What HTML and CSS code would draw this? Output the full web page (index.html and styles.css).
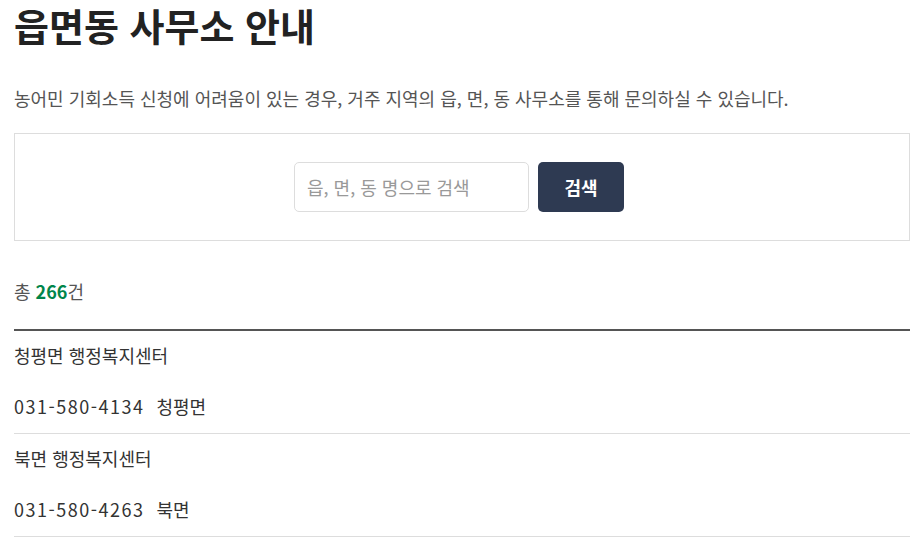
FILE: index.html
```html
<!DOCTYPE html>
<html lang="ko">
<head>
    <meta charset="utf-8">
    <title>읍면동 사무소 안내</title>
    <link rel="stylesheet" href="styles.css">
</head>
<body>
    <main class="page">
        <h1 class="page-title">읍면동 사무소 안내</h1>
        <p class="page-desc">농어민 기회소득 신청에 어려움이 있는 경우, 거주 지역의 읍, 면, 동 사무소를 통해 문의하실 수 있습니다.</p>

        <form class="search-box" onsubmit="return false;">
            <input class="search-input" type="text" placeholder="읍, 면, 동 명으로 검색">
            <button class="search-btn" type="submit">검색</button>
        </form>

        <p class="total">총 <strong>266</strong>건</p>

        <ul class="office-list">
            <li class="office">
                <div class="office-name">청평면 행정복지센터</div>
                <div class="office-info"><span class="tel">031-580-4134</span><span class="area">청평면</span></div>
            </li>
            <li class="office">
                <div class="office-name">북면 행정복지센터</div>
                <div class="office-info"><span class="tel">031-580-4263</span><span class="area">북면</span></div>
            </li>
        </ul>
    </main>
</body>
</html>
```

FILE: styles.css
```css
body {
    margin: 0;
    font-family: "Noto Sans CJK KR", "Noto Sans", sans-serif;
    color: #333;
    background: #fff;
}

.page {
    padding: 0 5px 0 14px;
}

.page-title {
    margin: -2px 0 0;
    font-size: 38px;
    line-height: 54px;
    font-weight: 700;
    color: #222;
}

.page-desc {
    margin: 33px 0 0;
    font-size: 18px;
    line-height: 26px;
    color: #555;
}

.search-box {
    display: flex;
    justify-content: center;
    gap: 9px;
    margin-top: 22px;
    padding: 28px 6px 28px 0;
    border: 1px solid #ddd;
}

.search-input {
    width: 235px;
    height: 50px;
    box-sizing: border-box;
    padding: 0 12px;
    border: 1px solid #ddd;
    border-radius: 5px;
    font-family: inherit;
    font-size: 18px;
    color: #333;
}

.search-input::placeholder {
    color: #999;
}

.search-btn {
    width: 86px;
    height: 50px;
    border: 0;
    border-radius: 5px;
    background: #2e3a52;
    color: #fff;
    font-family: inherit;
    font-size: 18px;
    font-weight: 700;
}

.total {
    margin: 38px 0 0;
    font-size: 18px;
    line-height: 24px;
    color: #555;
}

.total strong {
    color: #00854a;
}

.office-list {
    list-style: none;
    margin: 26px 0 0;
    padding: 0;
    border-top: 2px solid #555;
}

.office {
    padding: 12px 0 15px;
    border-bottom: 1px solid #ddd;
}

.office-name,
.office-info {
    font-size: 18px;
    line-height: 24px;
    color: #333;
}

.office-info {
    margin-top: 27px;
}

.tel {
    margin-right: 12px;
    letter-spacing: 1.5px;
}
```
